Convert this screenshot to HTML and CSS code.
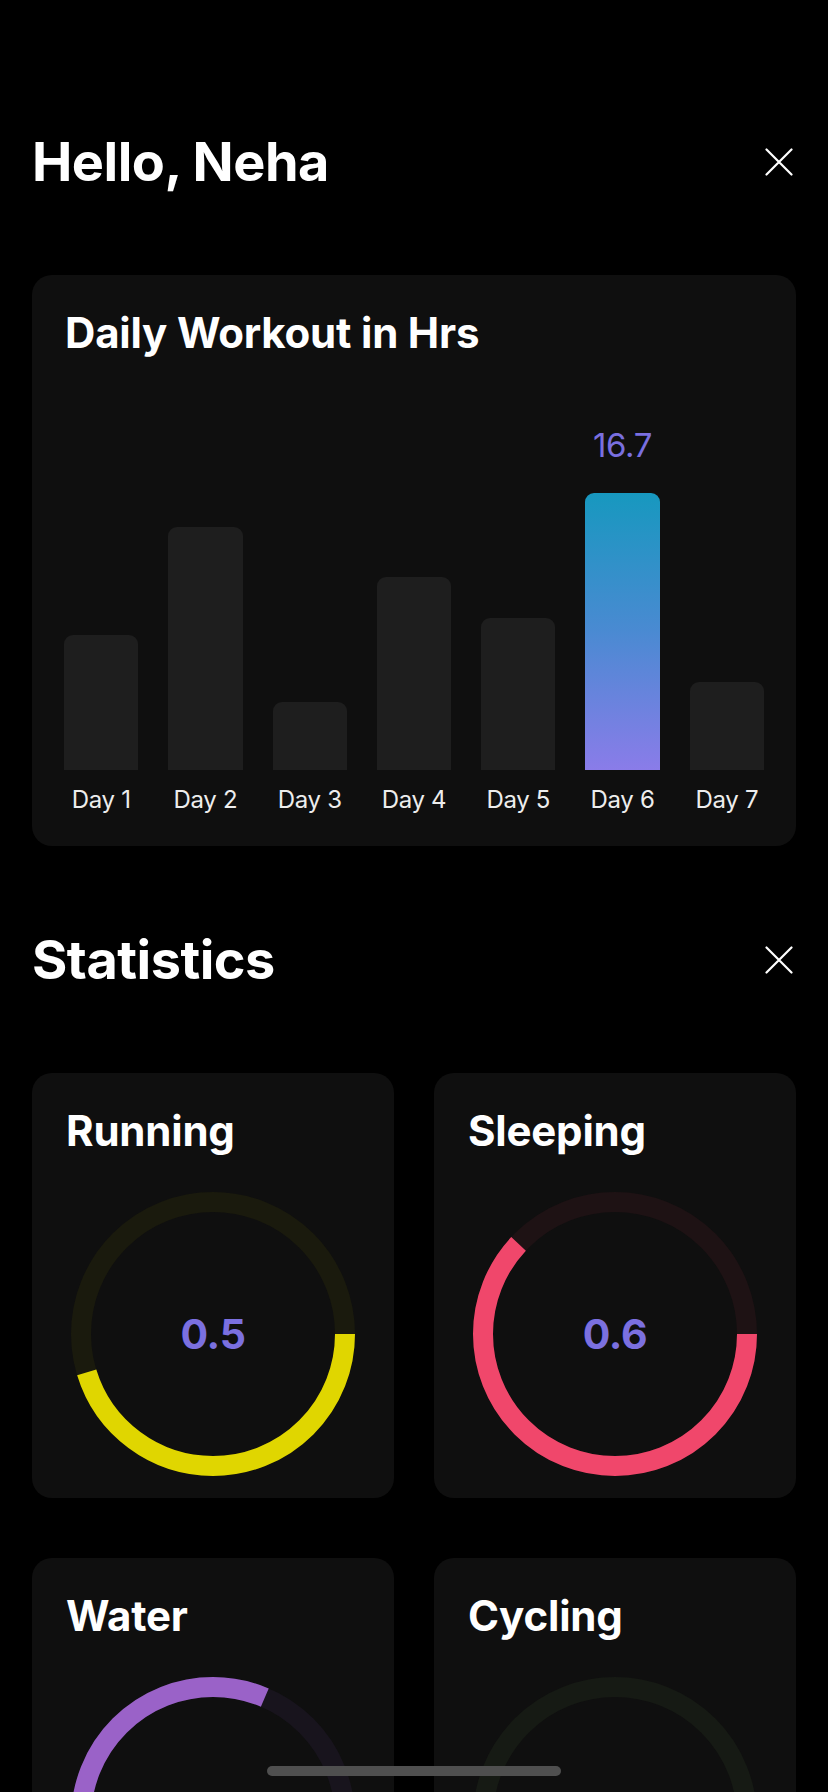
FILE: index.html
```html
<!DOCTYPE html>
<html lang="en">
<head>
<meta charset="utf-8">
<title>Fitness</title>
<link rel="stylesheet" href="styles.css">
</head>
<body>
<div class="screen">
  <header class="section-head">
    <h1 class="big-title">Hello, Neha</h1>
    <button class="close" aria-label="Close">
      <svg viewBox="0 0 28 28" width="28" height="28"><path d="M1.5 1.5 L26.5 26.5 M26.5 1.5 L1.5 26.5" stroke="#fff" stroke-width="2.2" stroke-linecap="round" fill="none"/></svg>
    </button>
  </header>

  <section class="card workout">
    <h2 class="card-title">Daily Workout in Hrs</h2>
    <div class="chart">
      <div class="col"><div class="bar" style="height:135px"></div><span class="day">Day 1</span></div>
      <div class="col"><div class="bar" style="height:243px"></div><span class="day">Day 2</span></div>
      <div class="col"><div class="bar" style="height:68px"></div><span class="day">Day 3</span></div>
      <div class="col"><div class="bar" style="height:193px"></div><span class="day">Day 4</span></div>
      <div class="col"><div class="bar" style="height:152px"></div><span class="day">Day 5</span></div>
      <div class="col active"><span class="val">16.7</span><div class="bar" style="height:277px"></div><span class="day">Day 6</span></div>
      <div class="col"><div class="bar" style="height:88px"></div><span class="day">Day 7</span></div>
    </div>
  </section>

  <header class="section-head stats-head">
    <h1 class="big-title">Statistics</h1>
    <button class="close" aria-label="Close">
      <svg viewBox="0 0 28 28" width="28" height="28"><path d="M1.5 1.5 L26.5 26.5 M26.5 1.5 L1.5 26.5" stroke="#fff" stroke-width="2.2" stroke-linecap="round" fill="none"/></svg>
    </button>
  </header>

  <div class="stats">
    <section class="card stat">
      <h2 class="card-title">Running</h2>
      <div class="ring">
        <svg viewBox="0 0 284 284" width="284" height="284">
          <circle class="track track-running" cx="142" cy="142" r="132"/>
          <circle class="arc arc-running" cx="142" cy="142" r="132" stroke-dasharray="375.5 829.4"/>
        </svg>
        <span class="ring-val">0.5</span>
      </div>
    </section>
    <section class="card stat">
      <h2 class="card-title">Sleeping</h2>
      <div class="ring">
        <svg viewBox="0 0 284 284" width="284" height="284">
          <circle class="track track-sleeping" cx="142" cy="142" r="132"/>
          <circle class="arc arc-sleeping" cx="142" cy="142" r="132" stroke-dasharray="513.7 829.4"/>
        </svg>
        <span class="ring-val">0.6</span>
      </div>
    </section>
    <section class="card stat">
      <h2 class="card-title">Water</h2>
      <div class="ring">
        <svg viewBox="0 0 284 284" width="284" height="284">
          <circle class="track track-water" cx="142" cy="142" r="132"/>
          <circle class="arc arc-water" cx="142" cy="142" r="132" stroke-dasharray="675 829.4"/>
        </svg>
        <span class="ring-val">0.8</span>
      </div>
    </section>
    <section class="card stat">
      <h2 class="card-title">Cycling</h2>
      <div class="ring">
        <svg viewBox="0 0 284 284" width="284" height="284">
          <circle class="track track-cycling" cx="142" cy="142" r="132"/>
          <circle class="arc arc-cycling" cx="142" cy="142" r="132" stroke-dasharray="330 829.4"/>
        </svg>
        <span class="ring-val">0.4</span>
      </div>
    </section>
  </div>

  <div class="home-indicator"></div>
</div>
</body>
</html>
```

FILE: styles.css
```css
* { box-sizing: border-box; }

html, body {
  margin: 0;
  padding: 0;
  background: #000;
}

body {
  font-family: Inter, "Noto Sans", "Liberation Sans", sans-serif;
  color: #fff;
}

.screen {
  position: relative;
  width: 828px;
  height: 1792px;
  overflow: hidden;
  padding: 130px 32px 0;
  background: #000;
}

.section-head {
  display: flex;
  align-items: center;
  justify-content: space-between;
  height: 64px;
}

.big-title {
  margin: 0;
  font-size: 54px;
  line-height: 64px;
  font-weight: 700;
  letter-spacing: -0.5px;
}

.close {
  width: 28px;
  height: 28px;
  padding: 0;
  margin-right: 3px;
  border: 0;
  background: none;
  display: flex;
}

.card {
  background: #0f0f0f;
  border-radius: 20px;
}

.card-title {
  margin: 0;
  font-size: 42px;
  line-height: 48px;
  font-weight: 700;
  letter-spacing: -0.2px;
}

.workout {
  margin-top: 81px;
  padding: 34px 32px 32px 32px;
}

.workout .card-title {
  padding-left: 1px;
}

.chart {
  height: 457px;
  display: flex;
  align-items: flex-end;
  gap: 30px;
}

.col {
  flex: 1;
  display: flex;
  flex-direction: column;
  align-items: stretch;
}

.bar {
  background: #1e1e1e;
  border-radius: 9px 9px 0 0;
}

.active .bar {
  background: linear-gradient(180deg, #1798bf 0%, #4a8ad2 50%, #8a7ce9 100%);
}

.val {
  font-size: 33px;
  line-height: 36px;
  color: #7a6fe0;
  text-align: center;
  margin-bottom: 30px;
  letter-spacing: -0.4px;
}

.day {
  margin-top: 16px;
  font-size: 24px;
  line-height: 28px;
  color: #ededed;
  text-align: center;
  white-space: nowrap;
  letter-spacing: -0.3px;
}

.stats-head {
  margin-top: 82px;
}

.stats {
  margin-top: 81px;
  display: grid;
  grid-template-columns: 1fr 1fr;
  column-gap: 40px;
  row-gap: 60px;
}

.stat {
  height: 425px;
  padding: 34px 0 22px 34px;
}

.ring {
  margin-top: 37px;
  margin-left: -34px;
  display: grid;
  place-items: center;
}

.ring svg,
.ring .ring-val {
  grid-area: 1 / 1;
}

.ring-val {
  font-size: 41px;
  line-height: 48px;
  font-weight: 700;
  color: #7b70e0;
  letter-spacing: -0.3px;
}

.track,
.arc {
  fill: none;
  stroke-width: 20;
}

.track-running { stroke: #1a1a0d; }
.track-sleeping { stroke: #1e1214; }
.track-water { stroke: #18141d; }
.track-cycling { stroke: #161a14; }

.arc-running { stroke: #e0d600; }
.arc-sleeping { stroke: #f0476b; }
.arc-water { stroke: #9a62c8; }
.arc-cycling { stroke: #4cd964; }

.home-indicator {
  position: absolute;
  left: 267px;
  bottom: 16px;
  width: 294px;
  height: 10px;
  border-radius: 5px;
  background: #4f4f4f;
}
```
